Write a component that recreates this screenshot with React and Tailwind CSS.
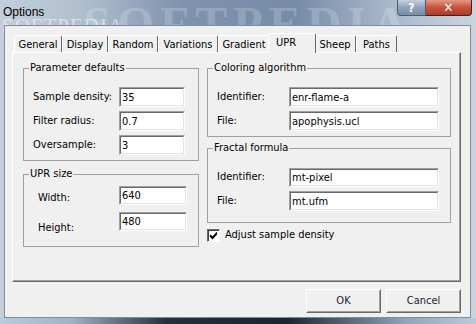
import React from 'react';

const font = { fontFamily: '"DejaVu Sans Condensed", "Liberation Sans", Arial, sans-serif' };

const Edit = ({ w, h = 'h-[20px]', value }) => (
    <div className={`${w} ${h} bg-white border border-t-[#a0a0a0] border-l-[#a0a0a0] border-r-white border-b-white`}>
        <div className="w-full h-full border border-t-[#696969] border-l-[#696969] border-r-[#e3e3e3] border-b-[#e3e3e3] flex items-center pl-[1px] leading-none">
            {value}
        </div>
    </div>
);

const Button = ({ children }) => (
    <div className="w-[75px] h-[24px] border border-t-white border-l-white border-r-[#696969] border-b-[#696969] bg-[#f0f0f0]">
        <div className="w-full h-full border border-t-[#f0f0f0] border-l-[#f0f0f0] border-r-[#a0a0a0] border-b-[#a0a0a0] flex items-center justify-center text-[#1a1a2e]">
            {children}
        </div>
    </div>
);

const Tab = ({ w, label }) => (
    <div className={`${w} h-[17px] border border-b-0 border-t-white border-l-white border-r-[#696969] rounded-t-[2px] flex items-center justify-center leading-none pt-[1px]`}>
        {label}
    </div>
);

const Group = ({ title, className, children }) => (
    <fieldset className={`border border-[#a0a0a0] ${className}`}>
        <legend className="ml-[5px] px-[1px] leading-[14px]">{title}</legend>
        {children}
    </fieldset>
);

export default function App() {
    return (
        <div
            className="w-[476px] h-[324px] flex flex-col relative overflow-hidden bg-[linear-gradient(90deg,#c4cfdb_0%,#aebdcd_18%,#7f93ae_38%,#768ba8_62%,#a9b9cb_82%,#c9d4df_100%)] text-[11px] text-black"
            style={font}
        >
            {/* watermark */}
            <div className="absolute left-[84px] top-[-12px] text-[48px] font-bold tracking-[6px] text-white/20 pointer-events-none" style={{ fontFamily: '"Liberation Serif", serif' }}>
                SOFTPEDIA
            </div>
            <div className="absolute left-[2px] top-[11px] text-[21px] tracking-[1px] text-white/50 pointer-events-none" style={{ fontFamily: '"Liberation Serif", serif' }}>
                SOFTPEDIA
            </div>

            {/* title bar */}
            <div className="h-[25px] flex items-start justify-between relative">
                <div className="pl-[3px] pt-[3px] text-[12px] text-black" style={{ fontFamily: '"Liberation Sans", Arial, sans-serif' }}>Options</div>
                <div className="flex mr-[4px]">
                    <div className="w-[29px] h-[16px] rounded-bl-[4px] border border-t-0 border-[#4c5b6e] bg-[linear-gradient(180deg,#c5d1de,#8fa2ba_50%,#7a8ea9)] flex items-center justify-center text-white font-bold text-[12px] leading-none">
                        ?
                    </div>
                    <div className="w-[46px] h-[16px] rounded-br-[4px] border border-t-0 border-l-0 border-[#4d1c14] bg-[linear-gradient(180deg,#e59a84,#c8523c_50%,#b13a24)] flex items-center justify-center text-white font-bold text-[13px] leading-none">
                        ✕
                    </div>
                </div>
            </div>

            {/* client area */}
            <div className="ml-[4px] mr-[5px] h-[293px] border border-[#7e8c9c] bg-[#f0f0f0] flex flex-col pl-[7px] pr-[9px] relative">
                {/* tabs */}
                <div className="mt-[7px] h-[19px] flex items-end pl-[2px]">
                    <Tab w="w-[48px]" label="General" />
                    <Tab w="w-[46px]" label="Display" />
                    <Tab w="w-[50px]" label="Random" />
                    <Tab w="w-[60px]" label="Variations" />
                    <Tab w="w-[52px]" label="Gradient" />
                    <div className="w-[48px] h-[20px] -mx-[2px] -mb-[1px] relative z-10 bg-[#f0f0f0] border border-b-0 border-t-white border-l-white border-r-[#696969] rounded-t-[2px] flex items-start pl-[7px] pt-[3px] leading-none">
                        UPR
                    </div>
                    <Tab w="w-[42px]" label="Sheep" />
                    <Tab w="w-[41px]" label="Paths" />
                </div>

                {/* panel */}
                <div className="w-[449px] h-[230px] border border-t-white border-l-white border-r-[#696969] border-b-[#696969] shadow-[inset_-1px_-1px_0_#a0a0a0] flex gap-[8px] pl-[10px] pt-[8px]">
                    <div className="w-[176px] flex flex-col">
                        <Group title="Parameter defaults" className="pb-[5px]">
                            <div className="mt-[12px] flex flex-col gap-[4px] pl-[9px]">
                                <div className="flex items-center">
                                    <div className="w-[86px]">Sample density:</div>
                                    <Edit w="w-[66px]" value="35" />
                                </div>
                                <div className="flex items-center">
                                    <div className="w-[86px]">Filter radius:</div>
                                    <Edit w="w-[66px]" value="0.7" />
                                </div>
                                <div className="flex items-center">
                                    <div className="w-[86px]">Oversample:</div>
                                    <Edit w="w-[66px]" value="3" />
                                </div>
                            </div>
                        </Group>
                        <Group title="UPR size" className="mt-[6px] pb-[10px]">
                            <div className="mt-[5px] flex flex-col gap-[5px] pl-[14px]">
                                <div className="flex items-start">
                                    <div className="w-[81px] pt-[4px]">Width:</div>
                                    <Edit w="w-[68px]" h="h-[19px]" value="640" />
                                </div>
                                <div className="flex items-start">
                                    <div className="w-[81px] pt-[8px]">Height:</div>
                                    <Edit w="w-[68px]" h="h-[19px]" value="480" />
                                </div>
                            </div>
                        </Group>
                    </div>

                    <div className="w-[244px] flex flex-col">
                        <Group title="Coloring algorithm" className="pb-[5px]">
                            <div className="mt-[12px] flex flex-col gap-[4px] pl-[9px]">
                                <div className="flex items-center">
                                    <div className="w-[72px]">Identifier:</div>
                                    <Edit w="w-[150px]" value="enr-flame-a" />
                                </div>
                                <div className="flex items-center">
                                    <div className="w-[72px]">File:</div>
                                    <Edit w="w-[150px]" value="apophysis.ucl" />
                                </div>
                            </div>
                        </Group>
                        <Group title="Fractal formula" className="mt-[4px] pb-[11px]">
                            <div className="mt-[13px] flex flex-col gap-[4px] pl-[9px]">
                                <div className="flex items-center">
                                    <div className="w-[72px]">Identifier:</div>
                                    <Edit w="w-[150px]" h="h-[19px]" value="mt-pixel" />
                                </div>
                                <div className="flex items-center">
                                    <div className="w-[72px]">File:</div>
                                    <Edit w="w-[150px]" value="mt.ufm" />
                                </div>
                            </div>
                        </Group>
                        <div className="mt-[4px] flex items-center gap-[5px]">
                            <div className="w-[13px] h-[13px] bg-white border border-t-[#696969] border-l-[#696969] border-r-white border-b-white shadow-[inset_1px_1px_0_#404040] flex items-center justify-center">
                                <svg width="9" height="9" viewBox="0 0 9 9">
                                    <path d="M1 4 L3.5 6.5 L8 1.5 M1 5 L3.5 7.5 L8 2.5" stroke="#000" strokeWidth="1.3" fill="none" />
                                </svg>
                            </div>
                            <span>Adjust sample density</span>
                        </div>
                    </div>
                </div>

                {/* buttons */}
                <div className="mt-[7px] flex justify-end gap-[5px]">
                    <Button>OK</Button>
                    <Button>Cancel</Button>
                </div>
            </div>

            {/* bottom frame shadow */}
            <div className="flex-1 bg-[linear-gradient(90deg,#b7cbe0_0%,#9fb2c7_15%,#26303c_35%,#1b2430_60%,#8fa3ba_85%,#b9cadb_100%)]" />
        </div>
    );
}
